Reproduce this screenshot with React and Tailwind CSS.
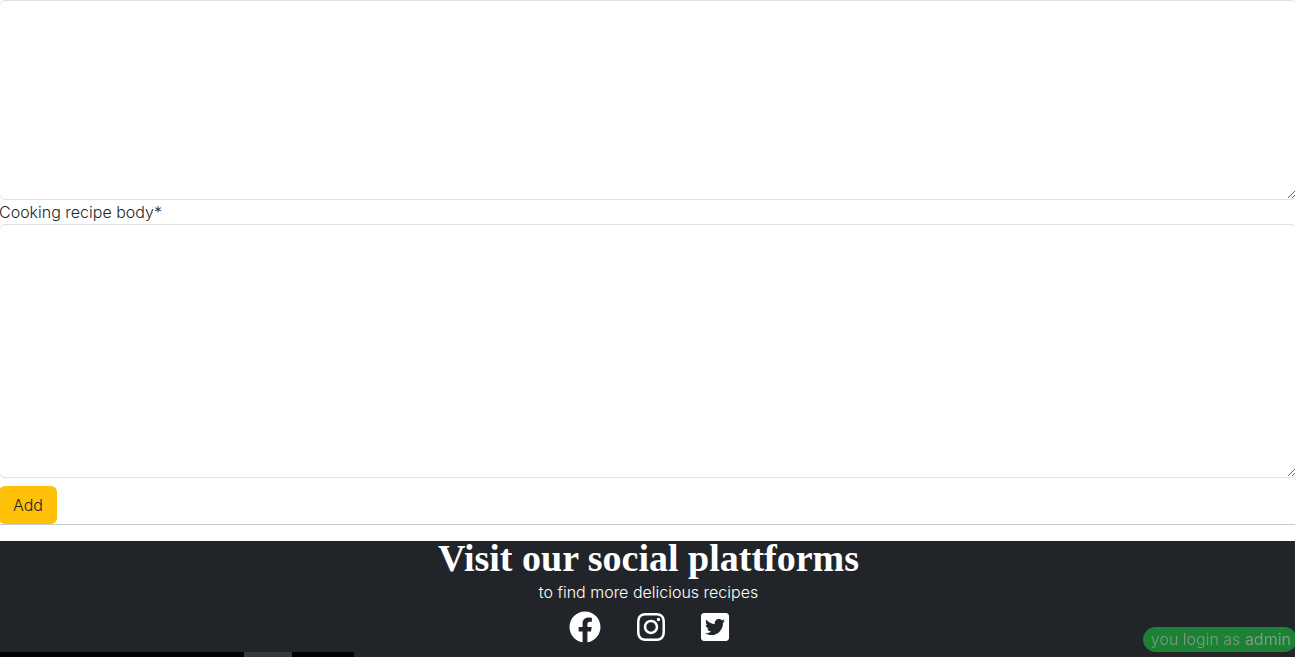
import { FaFacebook, FaInstagram, FaTwitterSquare } from "react-icons/fa";

function RecipeForm() {
  return (
    <form className="-ml-px border-b border-[#c8cbce]" onSubmit={(e) => e.preventDefault()}>
      <textarea
        aria-label="Cooking recipe summary"
        className="block h-[200px] w-full resize-y rounded-md border border-[#dee2e6] px-3 py-2 outline-none"
      />
      <label htmlFor="recipe-body" className="block text-base font-light leading-6 text-[#212529]">
        Cooking recipe body*
      </label>
      <textarea
        id="recipe-body"
        className="block h-[254px] w-full resize-y rounded-md border border-[#dee2e6] px-3 py-2 outline-none"
      />
      <button
        type="submit"
        className="mt-2 block h-[38px] rounded-md bg-[#ffc107] px-3.5 text-base font-light text-[#212529]"
      >
        Add
      </button>
    </form>
  );
}

function SocialLinks() {
  return (
    <nav aria-label="Social platforms" className="mt-2 flex justify-center gap-9">
      <a href="#facebook" aria-label="Facebook">
        <FaFacebook className="h-8 w-8" />
      </a>
      <a href="#instagram" aria-label="Instagram">
        <FaInstagram className="h-8 w-7" />
      </a>
      <a href="#twitter" aria-label="Twitter">
        <FaTwitterSquare className="h-8 w-7" />
      </a>
    </nav>
  );
}

function BottomStrip() {
  return (
    <div className="mt-[9px] flex h-[5px] bg-[#252526]">
      <div className="w-[244px] bg-black" />
      <div className="w-12 bg-[#39373a]" />
      <div className="w-[62px] bg-black" />
    </div>
  );
}

export default function App() {
  return (
    <div className="overflow-x-clip bg-white font-['Inter',sans-serif]">
      <div className="-mr-0.5">
        <RecipeForm />
        <footer className="mt-4 bg-[#212529] text-center text-white">
          <h2 className="font-['Liberation_Serif',serif] text-[38px] font-bold leading-[34px]">
            Visit our social plattforms
          </h2>
          <p className="mt-1.5 text-base font-light leading-[22px]">to find more delicious recipes</p>
          <SocialLinks />
          <BottomStrip />
        </footer>
      </div>
      <div className="fixed -right-0.5 bottom-[5px] rounded-full bg-[#1b8135] pr-1.5 pl-2 text-base font-light leading-[25px] text-[#7f9a86]">
        you login as <span className="font-normal">admin</span>
      </div>
    </div>
  );
}
